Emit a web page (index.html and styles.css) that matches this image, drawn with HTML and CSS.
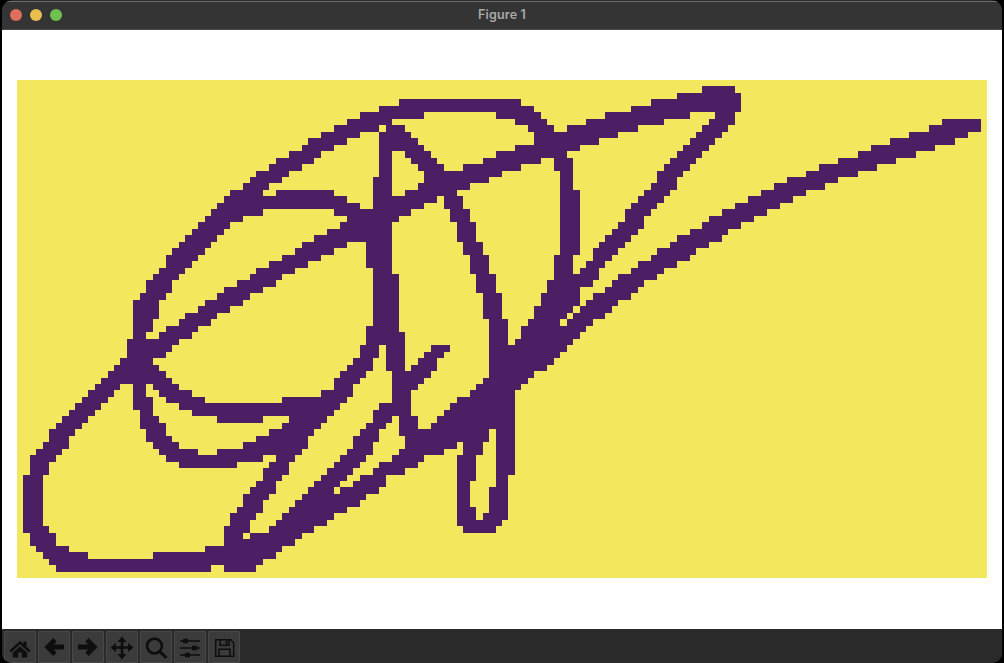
FILE: index.html
```html
<!DOCTYPE html>
<html lang="en">
<head>
<meta charset="utf-8">
<title>Figure 1</title>
<link rel="stylesheet" href="styles.css">
</head>
<body>
<div class="window">
  <header class="titlebar">
    <div class="lights">
      <span class="light light-red"></span>
      <span class="light light-yellow"></span>
      <span class="light light-green"></span>
    </div>
    <span class="title">Figure 1</span>
  </header>
  <main class="canvas">
    <svg class="plot" viewBox="0 0 150 77" preserveAspectRatio="none">
      <path class="ink" d="M106 1.5H111M102 2.5H112M59 3.5H78M98 3.5H112M56 4.5H80M95 4.5H112M53 5.5H63M74 5.5H81M91 5.5H104M108 5.5H111M51 6.5H58M77 6.5H82M88 6.5H100M107 6.5H111M143 6.5H149M49 7.5H56M57 7.5H60M79 7.5H83M85 7.5H96M106 7.5H110M141 7.5H149M47 8.5H53M56 8.5H61M80 8.5H93M105 8.5H109M138 8.5H147M45 9.5H51M56 9.5H62M80 9.5H90M104 9.5H108M135 9.5H145M44 10.5H49M56 10.5H63M77 10.5H87M103 10.5H107M132 10.5H142M42 11.5H47M56 11.5H58M60 11.5H64M74 11.5H85M102 11.5H106M130 11.5H139M40 12.5H46M56 12.5H58M61 12.5H65M72 12.5H81M83 12.5H86M101 12.5H105M127 12.5H136M39 13.5H44M56 13.5H58M62 13.5H66M69 13.5H78M83 13.5H86M100 13.5H104M124 13.5H133M37 14.5H42M56 14.5H58M63 14.5H75M84 14.5H86M99 14.5H103M122 14.5H130M36 15.5H41M55 15.5H58M63 15.5H73M84 15.5H86M99 15.5H102M119 15.5H127M35 16.5H39M55 16.5H58M62 16.5H70M84 16.5H86M98 16.5H102M117 16.5H125M33 17.5H38M40 17.5H49M55 17.5H58M60 17.5H68M84 17.5H87M97 17.5H101M115 17.5H122M32 18.5H51M55 18.5H65M66 18.5H69M84 18.5H87M96 18.5H100M113 18.5H120M31 19.5H53M55 19.5H63M66 19.5H69M84 19.5H87M95 19.5H99M111 19.5H118M30 20.5H38M49 20.5H61M67 20.5H70M84 20.5H87M94 20.5H98M109 20.5H116M29 21.5H35M51 21.5H59M67 21.5H70M84 21.5H87M94 21.5H97M107 21.5H114M28 22.5H33M50 22.5H58M68 22.5H71M84 22.5H87M93 22.5H97M106 22.5H112M27 23.5H32M48 23.5H58M68 23.5H71M84 23.5H87M92 23.5H96M104 23.5H110M26 24.5H31M46 24.5H58M68 24.5H71M84 24.5H87M91 24.5H95M102 24.5H109M25 25.5H30M44 25.5H51M54 25.5H58M69 25.5H72M84 25.5H87M90 25.5H94M101 25.5H107M24 26.5H29M43 26.5H49M54 26.5H58M69 26.5H72M84 26.5H87M89 26.5H93M99 26.5H105M23 27.5H28M41 27.5H47M54 27.5H58M70 27.5H73M83 27.5H86M89 27.5H92M98 27.5H104M23 28.5H27M39 28.5H45M54 28.5H58M70 28.5H73M83 28.5H86M88 28.5H91M96 28.5H102M22 29.5H26M37 29.5H43M55 29.5H58M70 29.5H73M83 29.5H86M87 29.5H90M95 29.5H100M21 30.5H25M36 30.5H41M55 30.5H59M71 30.5H74M83 30.5H90M93 30.5H99M20 31.5H24M34 31.5H40M55 31.5H59M71 31.5H74M82 31.5H89M92 31.5H97M20 32.5H24M32 32.5H38M55 32.5H59M71 32.5H74M82 32.5H87M91 32.5H96M19 33.5H23M31 33.5H36M55 33.5H59M72 33.5H75M81 33.5H87M89 33.5H95M18 34.5H22M29 34.5H35M55 34.5H59M72 34.5H75M81 34.5H87M88 34.5H93M18 35.5H22M28 35.5H33M55 35.5H59M72 35.5H75M80 35.5H86M87 35.5H92M18 36.5H22M26 36.5H31M55 36.5H59M72 36.5H75M80 36.5H85M86 36.5H91M18 37.5H21M25 37.5H30M55 37.5H59M73 37.5H76M79 37.5H84M85 37.5H89M18 38.5H21M23 38.5H28M54 38.5H59M73 38.5H76M78 38.5H88M18 39.5H20M22 39.5H27M54 39.5H60M73 39.5H76M78 39.5H87M17 40.5H25M54 40.5H60M73 40.5H76M77 40.5H86M17 41.5H24M53 41.5H56M57 41.5H60M64 41.5H67M73 41.5H85M17 42.5H23M53 42.5H56M57 42.5H60M63 42.5H66M73 42.5H84M16 43.5H21M52 43.5H55M57 43.5H60M62 43.5H65M73 43.5H83M15 44.5H22M51 44.5H55M57 44.5H60M61 44.5H65M73 44.5H82M14 45.5H23M50 45.5H54M58 45.5H64M73 45.5H80M13 46.5H24M49 46.5H53M58 46.5H63M72 46.5H79M12 47.5H16M18 47.5H20M21 47.5H25M49 47.5H52M58 47.5H62M71 47.5H78M11 48.5H15M18 48.5H20M22 48.5H27M47 48.5H52M58 48.5H61M70 48.5H77M10 49.5H14M18 49.5H21M23 49.5H29M41 49.5H51M58 49.5H61M68 49.5H77M9 50.5H13M18 50.5H21M25 50.5H50M56 50.5H61M67 50.5H77M8 51.5H12M19 51.5H21M27 51.5H49M55 51.5H61M66 51.5H77M7 52.5H11M19 52.5H22M31 52.5H38M42 52.5H48M55 52.5H58M59 52.5H62M65 52.5H77M6 53.5H10M19 53.5H23M41 53.5H47M54 53.5H57M59 53.5H62M64 53.5H77M5 54.5H9M20 54.5H23M39 54.5H46M53 54.5H56M59 54.5H73M74 54.5H77M5 55.5H8M20 55.5H24M37 55.5H45M52 55.5H56M60 55.5H73M74 55.5H77M4 56.5H8M21 56.5H25M35 56.5H45M52 56.5H55M60 56.5H68M69 56.5H72M74 56.5H77M3 57.5H7M22 57.5H28M31 57.5H44M51 57.5H55M59 57.5H66M69 57.5H72M74 57.5H77M2 58.5H6M23 58.5H38M40 58.5H43M50 58.5H54M58 58.5H63M68 58.5H71M74 58.5H77M2 59.5H5M25 59.5H34M39 59.5H42M49 59.5H53M56 59.5H62M68 59.5H71M74 59.5H77M2 60.5H5M38 60.5H42M48 60.5H52M55 60.5H60M68 60.5H71M74 60.5H77M1 61.5H4M38 61.5H41M47 61.5H51M53 61.5H57M68 61.5H71M74 61.5H76M1 62.5H4M37 62.5H40M46 62.5H50M52 62.5H57M68 62.5H70M74 62.5H76M1 63.5H4M36 63.5H40M45 63.5H49M50 63.5H56M68 63.5H70M73 63.5H76M1 64.5H4M35 64.5H39M44 64.5H54M68 64.5H70M73 64.5H76M1 65.5H4M35 65.5H38M43 65.5H53M68 65.5H70M73 65.5H76M1 66.5H4M34 66.5H38M42 66.5H51M68 66.5H71M73 66.5H76M1 67.5H4M33 67.5H37M41 67.5H49M68 67.5H71M72 67.5H76M1 68.5H4M33 68.5H36M40 68.5H48M68 68.5H75M1 69.5H5M32 69.5H36M39 69.5H46M69 69.5H74M2 70.5H6M32 70.5H35M36 70.5H44M2 71.5H6M32 71.5H43M3 72.5H8M29 72.5H41M4 73.5H11M21 73.5H40M5 74.5H38M6 75.5H30M32 75.5H37"/>
    </svg>
  </main>
  <footer class="toolbar">
    <button class="tool" type="button" aria-label="Home">
      <svg class="icon" viewBox="0 0 24 24"><path class="solid" d="M12 5.800 1.500 15.500l1.700 1.900L12 9.300l8.800 8.100 1.700-1.900-4-3.700V6.500h-3.200v2.400z"/><path class="solid" d="M12 11.200 4.800 17.800V22.500h5.400v-5h3.600v5h5.400v-4.700z"/></svg>
    </button>
    <button class="tool" type="button" aria-label="Back">
      <svg class="icon" viewBox="0 0 24 24"><path class="line line-heavy" d="M22 12H7M13 4.800 5.800 12l7.200 7.200"/></svg>
    </button>
    <button class="tool" type="button" aria-label="Forward">
      <svg class="icon" viewBox="0 0 24 24"><path class="line line-heavy" d="M2 12h15M11 4.800 18.200 12 11 19.200"/></svg>
    </button>
    <button class="tool" type="button" aria-label="Pan">
      <svg class="icon" viewBox="0 0 24 24"><path class="line line-mid" d="M12 5v15M4 12.500h16"/><path class="solid" d="M12 1.500 16.500 7h-9zM12 24.500 7.500 19h9zM.5 12.500 6 8v9zM23.500 12.500 18 8v9z"/></svg>
    </button>
    <button class="tool" type="button" aria-label="Zoom">
      <svg class="icon" viewBox="0 0 24 24"><circle class="line line-mid" cx="10.500" cy="11" r="7.400"/><path class="line line-wide" d="M15.800 16.500 22.500 23"/></svg>
    </button>
    <button class="tool" type="button" aria-label="Subplots">
      <svg class="icon" viewBox="0 0 24 24"><path class="line line-thin" d="M2 6h20M2 13h20M2 20h20"/><path class="solid" d="M5 3.800h5v4.400H5zM14 10.800h5v4.400h-5zM7 17.800h5v4.400H7z"/></svg>
    </button>
    <button class="tool" type="button" aria-label="Save">
      <svg class="icon" viewBox="0 0 24 24"><path class="line line-outline" d="M3.700 4.700h15l3 3v13.600h-18z"/><path class="line line-outline" d="M8 4.700v5.600h9V4.700M7 21.300v-7h11v7"/><path class="solid" d="M13.500 5.500h2v4h-2z"/></svg>
    </button>
  </footer>
</div>
</body>
</html>
```
FILE: styles.css
```css
html, body {
  margin: 0;
  height: 100%;
  background: #000;
}

.window {
  box-sizing: border-box;
  height: 663px;
  margin: 0 2px;
  padding-top: 1px;
  display: flex;
  flex-direction: column;
  overflow: hidden;
  border-radius: 11px 11px 10px 10px;
  background: #2a2a2a;
}

.titlebar {
  position: relative;
  box-sizing: border-box;
  flex: 0 0 29px;
  display: flex;
  align-items: center;
  justify-content: center;
  background: #343434;
  border-top: 1px solid #6c6c6c;
  border-bottom: 1px solid #4a4a4a;
}

.lights {
  position: absolute;
  left: 8px;
  top: 7px;
  display: flex;
  gap: 8px;
}

.light {
  width: 12px;
  height: 12px;
  border-radius: 50%;
}

.light-red { background: #de6f5e; }
.light-yellow { background: #e8bf4e; }
.light-green { background: #6fc24f; }

.title {
  font: 600 12.500px/1 Inter, "Liberation Sans", sans-serif;
  color: #a8a8a8;
  letter-spacing: 0.2px;
}

.canvas {
  flex: 1 1 auto;
  min-height: 0;
  padding: 50px 15px 51px;
  background: #fff;
}

.plot {
  display: block;
  width: 970px;
  height: 498px;
  background: #f3e85d;
  shape-rendering: crispEdges;
}

.ink {
  fill: none;
  stroke: #4a1f63;
  stroke-width: 1;
}

.toolbar {
  flex: 0 0 34px;
  box-sizing: border-box;
  display: flex;
  gap: 2px;
  padding: 2px 0 0 2px;
  background: #2a2a2a;
}

.tool {
  flex: 0 0 32px;
  box-sizing: border-box;
  height: 32px;
  padding: 3px;
  margin: 0;
  display: flex;
  align-items: flex-start;
  justify-content: center;
  background: #3b3b3b;
  border: 1px solid #484848;
  border-radius: 1px;
}

.icon {
  display: block;
  flex: none;
  width: 24px;
  height: 24px;
  overflow: visible;
}

.solid { fill: #0e0e0e; }

.line {
  fill: none;
  stroke: #0e0e0e;
}

.line-heavy { stroke-width: 4.800; }
.line-mid { stroke-width: 2.600; }
.line-wide { stroke-width: 3; }
.line-thin { stroke-width: 1.300; }
.line-outline { stroke-width: 1.500; }
```
